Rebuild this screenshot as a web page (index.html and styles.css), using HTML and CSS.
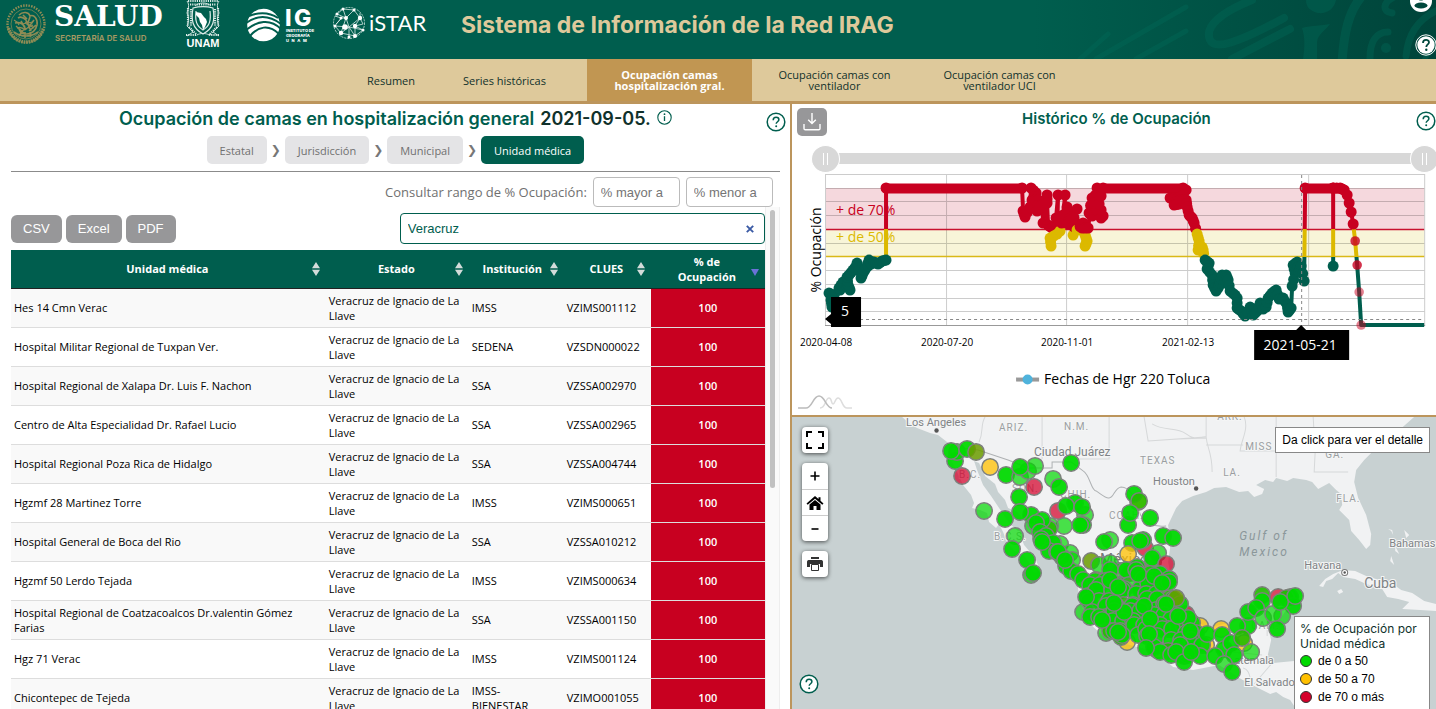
FILE: index.html
```html
<!DOCTYPE html>
<html lang="es">
<head>
<meta charset="utf-8">
<title>Sistema de Información de la Red IRAG</title>
<link rel="stylesheet" href="styles.css">
</head>
<body>
<svg class="defs" aria-hidden="true">
  <symbol id="help" viewBox="0 0 20 20">
    <circle cx="10" cy="10" r="8.8" fill="#fff" stroke="currentColor" stroke-width="1.5"/>
    <path d="M7.2 8.2C7.2 6.3 8.5 5.3 10.1 5.3s2.8 1 2.8 2.5c0 1.900-2.700 2-2.700 4" fill="none" stroke="currentColor" stroke-width="1.5"/>
    <circle cx="10.200" cy="14.200" r="1" fill="currentColor"/>
  </symbol>
  <symbol id="sort" viewBox="0 0 8 14">
    <path d="M4 0l4 6.200H0zM4 14L0 7.800h8z" fill="#d3dcda"/>
  </symbol>
</svg>

<header class="top">
  <svg class="pattern" viewBox="0 0 436 59" preserveAspectRatio="xMaxYMid slice" aria-hidden="true">
    <g fill="none" stroke="#006a58" stroke-opacity=".4" stroke-linecap="round">
      <path stroke-width="5" d="M80 59L108 34M96 59l90-52M136 59l50-28"/>
      <path stroke-width="8" d="M252 0c-30 12-48 26-42 40 5 10 26 4 74-22M232 59l58-30"/>
      <path stroke-width="9" d="M362 -4c-14 16-18 38-20 66"/>
      <path stroke-width="7" d="M396-4c-14 6-14 16-4 17M370 58c0-16 6-26 18-26M406 56c2-20 10-36 32-46"/>
      <path stroke-width="5" d="M424 60l14-22"/>
    </g>
    <g fill="#006a58" fill-opacity=".4"><path d="M306 0h30c-2 10-10 14-18 13-8-2-12-6-12-13zM302 28c10-3 20-2 28-4-6 8-12 10-13 18v17h-14c2-12 2-22-1-31z"/><circle cx="386" cy="48" r="5"/></g>
  </svg>
  <svg class="seal" viewBox="0 0 42 42" role="img" aria-label="Escudo Nacional">
    <g fill="none" stroke="#8f8c55">
      <circle cx="21" cy="21" r="18.500" stroke-width="2.400" stroke-dasharray="1.500 1.200"/>
      <circle cx="21" cy="21" r="15" stroke-width=".7"/>
      <path stroke-width="3.400" stroke-dasharray="1.600 .8" d="M3.500 25c3 9 10 14 17.500 14s14.500-5 17.500-14"/>
      <path stroke-width="1.600" d="M14 12c4-4 10-3 11 1 4-2 8 3 7 9-1 5-5 9-10 9-4 0-7-2-8-5M13 15c3-2 6 0 8 2M10 20c4-1 8 1 10 4M12 25c3-1 6 0 8 2M18 12l4 4M25 14l-3 8M29 17l-6 8M31 22l-7 6M9 29c4 3 8 4 12 4s8-1 12-4M14 33l3-5M20 35v-6M26 34l-1-5M16 18l5 9M20 15l6 13"/>
      <path stroke-width="1.200" d="M9 17c2 1 4 2 5 5M11 23l9 8M17 21l11-2M15 29l13-7M20 19l9 6"/>
    </g>
  </svg>
  <div class="salud"><b>SALUD</b><span>SECRETARÍA DE SALUD</span></div>
  <div class="unam">
    <svg viewBox="0 0 36 38" aria-hidden="true">
      <g fill="none" stroke="#dcebe7">
        <path stroke-width="1.200" d="M8 8c-2 12-1 20 10 26C29 28 30 20 28 8 21 6 15 6 8 8zM11 11c-1 9 0 15 7 19 7-4 8-10 7-19"/>
        <path stroke-width="2.200" stroke-dasharray="1.200 1" d="M3 1h30M5 4.500h26M3 8v18M6 9v17M33 8v18M30 9v17M4 27l8 8M32 27l-8 8M1 35h11M24 35h11"/>
        <path stroke-width=".9" d="M2 1c3 4 1 8 0 12 2 4 2 8 0 13l6 6-6 4M34 1c-3 4-1 8 0 12-2 4-2 8 0 13l-6 6 6 4M12 35c3-2 9-2 12 0M10 6c4-4 12-4 16 0"/>
      </g>
      <path fill="#fff" d="M11 12l5 1 3 4 2 2 1 3-2 5-2 3-1-5-2-3-1-4-3-3z"/>
    </svg>
    <b>UNAM</b>
  </div>
  <svg class="ig" viewBox="0 0 70 34" role="img" aria-label="Instituto de Geografía UNAM">
    <circle cx="16.500" cy="17" r="16.300" fill="#fff"/>
    <g fill="none" stroke="#005e4e" stroke-width="2"><path d="M2 8C12 4 22 4 31 10M-1 15C10 7 22 7 34 16M-1 22c11-9 24-12 35-1M2 29c9-11 20-13 30-3"/></g>
    <g fill="#fff" font-family="Inter, sans-serif" font-weight="800">
      <text x="38" y="18" font-size="23">I</text><text x="47" y="18" font-size="23">G</text>
      <text x="39" y="24" font-size="4">INSTITUTO DE</text><text x="39" y="29" font-size="4">GEOGRAFÍA</text><text x="39" y="34" font-size="4">U&#160;&#160; N&#160;&#160; A&#160;&#160; M</text>
    </g>
  </svg>
  <svg class="istar" viewBox="0 0 96 34" role="img" aria-label="iSTAR">
    <g fill="none" stroke="#d8e8e4" stroke-width=".8">
      <circle cx="17" cy="17" r="15.500" stroke-dasharray="2 1"/>
      <path d="M5 8l9 4 8-8 6 8-5 8 8 4-8 6-6-9-8 6-6-7 6-8-6-2M14 12l3 9 11-9M14 12L9 27l14 3 0-10M4 18l5-5M22 4L11 3 14 12M28 12l3 6-8 2M9 12l5 0M3 20l14 1M17 21l0 10M28 7l0 5M11 3l-6 5M31 24l-14-3"/>
    </g>
    <g fill="#fff"><circle cx="5" cy="8" r="1.500"/><circle cx="14" cy="12" r="2"/><circle cx="22" cy="4" r="1.500"/><circle cx="28" cy="12" r="2.200"/><circle cx="23" cy="20" r="2.200"/><circle cx="31" cy="24" r="1.500"/><circle cx="23" cy="30" r="2"/><circle cx="13" cy="21" r="2.800"/><circle cx="9" cy="27" r="2.200"/><circle cx="3" cy="20" r="1.500"/><circle cx="9" cy="12" r="1.500"/><circle cx="11" cy="3" r="1.500"/><circle cx="17" cy="31" r="1.500"/></g>
    <text x="37" y="25" font-size="22" fill="#fff" font-family="Lato, sans-serif">iSTAR</text>
  </svg>
  <h1>Sistema de Información de la Red IRAG</h1>
  <button class="user" aria-label="Usuario"><svg viewBox="0 0 22 22"><circle cx="11" cy="11" r="11" fill="#fff"/><circle cx="11" cy="7" r="3.500" fill="#00483c"/><ellipse cx="11" cy="15.500" rx="6.500" ry="3" fill="#00483c"/></svg></button>
  <button class="tophelp" aria-label="Ayuda"><svg viewBox="0 0 22 22"><circle cx="11" cy="11" r="10.200" fill="none" stroke="#fff"/><circle cx="11" cy="11" r="8.700" fill="#fff"/><path d="M8 9c0-4 6-4 6-.7 0 2.200-2.700 2-2.700 4.700" fill="none" stroke="#00483c" stroke-width="1.800"/><circle cx="11.300" cy="15.800" r="1.200" fill="#00483c"/></svg></button>
</header>

<nav class="tabs">
  <a href="#" class="short">Resumen</a>
  <a href="#">Series históricas</a>
  <a href="#" class="active" aria-current="page">Ocupación camas hospitalización gral.</a>
  <a href="#">Ocupación camas con ventilador</a>
  <a href="#">Ocupación camas con ventilador UCI</a>
</nav>

<main class="board">
  <section class="left">
    <h2>Ocupación de camas en hospitalización general <span>2021-09-05.</span>
      <svg class="info" viewBox="0 0 15 15"><circle cx="7.500" cy="7.500" r="6.700" fill="none" stroke="#005e4e" stroke-width="1.100"/><path d="M7.500 6.200v4.800" fill="none" stroke="#005e4e" stroke-width="1.300"/><circle cx="7.500" cy="4.200" r=".9" fill="#005e4e"/></svg></h2>
    <button class="help" aria-label="Ayuda"><svg><use href="#help"/></svg></button>
    <div class="crumbs">
      <button>Estatal</button><i>❯</i><button>Jurisdicción</button><i>❯</i><button>Municipal</button><i>❯</i><button class="on">Unidad médica</button>
    </div>
    <form class="range-form">
      <label for="min">Consultar rango de % Ocupación:</label>
      <input id="min" placeholder="% mayor a"><input aria-label="% menor a" placeholder="% menor a">
    </form>
    <div class="scroller">
      <div class="content">
        <div class="tools">
          <button>CSV</button><button>Excel</button><button>PDF</button>
          <div class="search"><input aria-label="Buscar" value="Veracruz" autofocus><button aria-label="Borrar"><svg viewBox="0 0 8 8"><path d="M.8.8l6.400 6.400M7.200.8L.8 7.200" stroke="#3b5ba5" stroke-width="1.900"/></svg></button></div>
        </div>
        <table>
          <colgroup><col class="c1"><col class="c2"><col class="c3"><col class="c4"><col class="c5"></colgroup>
          <thead><tr>
            <th>Unidad médica<svg><use href="#sort"/></svg></th><th>Estado<svg><use href="#sort"/></svg></th><th class="tight">Institución<svg><use href="#sort"/></svg></th><th>CLUES<svg><use href="#sort"/></svg></th>
            <th aria-sort="descending">% de Ocupación<svg viewBox="0 0 8 14"><path d="M0 7h8l-4 7z" fill="#6a72d8"/></svg></th>
          </tr></thead>
          <tbody>
            <tr><td>Hes 14 Cmn Verac</td><td>Veracruz de Ignacio de La Llave</td><td>IMSS</td><td>VZIMS001112</td><td>100</td></tr>
            <tr><td>Hospital Militar Regional de Tuxpan Ver.</td><td>Veracruz de Ignacio de La Llave</td><td>SEDENA</td><td>VZSDN000022</td><td>100</td></tr>
            <tr><td>Hospital Regional de Xalapa Dr. Luis F. Nachon</td><td>Veracruz de Ignacio de La Llave</td><td>SSA</td><td>VZSSA002970</td><td>100</td></tr>
            <tr><td>Centro de Alta Especialidad Dr. Rafael Lucio</td><td>Veracruz de Ignacio de La Llave</td><td>SSA</td><td>VZSSA002965</td><td>100</td></tr>
            <tr><td>Hospital Regional Poza Rica de Hidalgo</td><td>Veracruz de Ignacio de La Llave</td><td>SSA</td><td>VZSSA004744</td><td>100</td></tr>
            <tr><td>Hgzmf 28 Martinez Torre</td><td>Veracruz de Ignacio de La Llave</td><td>IMSS</td><td>VZIMS000651</td><td>100</td></tr>
            <tr><td>Hospital General de Boca del Rio</td><td>Veracruz de Ignacio de La Llave</td><td>SSA</td><td>VZSSA010212</td><td>100</td></tr>
            <tr><td>Hgzmf 50 Lerdo Tejada</td><td>Veracruz de Ignacio de La Llave</td><td>IMSS</td><td>VZIMS000634</td><td>100</td></tr>
            <tr><td>Hospital Regional de Coatzacoalcos Dr.valentin Gómez Farias</td><td>Veracruz de Ignacio de La Llave</td><td>SSA</td><td>VZSSA001150</td><td>100</td></tr>
            <tr><td>Hgz 71 Verac</td><td>Veracruz de Ignacio de La Llave</td><td>IMSS</td><td>VZIMS001124</td><td>100</td></tr>
            <tr><td>Chicontepec de Tejeda</td><td>Veracruz de Ignacio de La Llave</td><td>IMSS-BIENESTAR</td><td>VZIMO001055</td><td>100</td></tr>
          </tbody>
        </table>
      </div>
      <div class="rail"><div class="thumb"></div></div>
    </div>
  </section>

  <section class="right">
    <div class="history">
      <div class="chart-head">
        <button class="download" aria-label="Descargar"><svg viewBox="0 0 18 18"><path d="M9 0v10M5.200 6.800L9 10.600l3.800-3.800M1 11v4.500c0 .8.500 1.300 1.300 1.300h13.400c.8 0 1.300-.5 1.300-1.300V11" fill="none" stroke="#fff" stroke-width="1.400"/></svg></button>
        <h3>Histórico % de Ocupación</h3>
        <button class="help" aria-label="Ayuda"><svg><use href="#help"/></svg></button>
      </div>
      <div class="period">
        <input type="range" aria-label="Fecha inicial" min="0" max="100" value="0"><input type="range" aria-label="Fecha final" min="0" max="100" value="100">
      </div>
      <svg class="plot" viewBox="792 173 644 242" role="img" aria-label="Histórico de ocupación">
        <defs><linearGradient id="levels" gradientUnits="userSpaceOnUse" x1="0" y1="174" x2="0" y2="326">
          <stop offset=".365" stop-color="#c80020"/><stop offset=".365" stop-color="#dcb900"/><stop offset=".546" stop-color="#dcb900"/><stop offset=".546" stop-color="#005e4e"/></linearGradient></defs>
        <path fill="#f5d8dd" d="M826 188h598v41H826z"/><path fill="#f8f5d8" d="M826 230h598v27H826z"/>
        <path stroke="#000" stroke-opacity=".2" fill="none" d="M825.500 325V174.500H1424.500V325M826 188.500h598M826 201.500h598M826 215.500h598M826 243.500h598M826 270.500h598M826 284.500h598M826 298.500h598M826 311.500h598M946.500 175v150M1066.500 175v150M1187.500 175v150M1308.500 175v150"/>
        <path stroke="#999" d="M825 325.500h600"/>
        <path stroke="#c8102e" stroke-width="1.500" d="M826 229.500h598"/><path stroke="#d9b918" stroke-width="1.500" d="M826 256.500h598"/>
        <g id="series"></g>
        <text x="836" y="215" font-size="14" fill="#c80020">+ de 70%</text>
        <text x="836" y="242" font-size="14" fill="#dcb900">+ de 50%</text>
        <path stroke="#888" stroke-dasharray="3 3" d="M860 319.500h564M1301.500 175v150"/>
        <text class="mid" transform="translate(821 250) rotate(-90)" font-size="14">% Ocupación</text>
        <g class="mid" font-size="10"><text x="826" y="346">2020-04-08</text><text x="947" y="346">2020-07-20</text><text x="1067" y="346">2020-11-01</text><text x="1188" y="346">2021-02-13</text></g>
        <path d="M831 297h30v30h-30v-3l-6-5 6-5zM1254 330h42l5-5 5 5h43v30h-95z"/>
        <g class="mid" fill="#fff" font-size="14"><text x="845" y="316">5</text><text x="1300" y="350">2021-05-21</text></g>
        <path stroke="#999" stroke-width="4" d="M1016 379.500h23"/><circle cx="1027.500" cy="379.500" r="5" fill="#4fb3dc"/>
        <text x="1044" y="384" font-size="14">Fechas de Hgr 220 Toluca</text>
        <path fill="none" stroke="#ddd" stroke-width="1.500" d="M820 408c6 0 5-10 9-10 3 0 2 6 4 6s2-6 5-6c4 0 4 10 9 10h5"/><path fill="none" stroke="#bbb" stroke-width="1.500" d="M798 408h8c6 0 7-12 13-12s7 12 13 12"/>
      </svg>
    </div>
    <div class="map">
      <svg class="canvas" viewBox="792 417 644 292" preserveAspectRatio="xMidYMid slice" role="img" aria-label="Mapa de unidades médicas">
        <g fill="#f1f2f3">
          <path d="M902 417L910 424 917 428 930 433 938 435 947 442 953 448 950 458 957 472 963 485 971 495 974 503 972 508 980 510 987 513 989 522 996 528 999 524 1003 532 1007 542 1014 551 1023 555 1029 563 1034 573 1040 571 1036 560 1030 552 1024 545 1019 532 1010 524 1003 514 997 505 991 496 983 485 977 470 974 461 979 463 985 476 995 484 998 492 1005 500 1008 508 1017 512 1030 527 1043 545 1063 566 1077 582 1080 602 1088 622 1103 636 1126 644 1156 652 1173 667 1193 670 1219 665 1239 678 1256 687 1270 694 1276 692 1283 697 1290 700 1300 715H1345V663L1294 661 1273 663 1267 658 1271 640 1268 628 1278 622 1286 610 1303 597 1293 588 1256 592 1246 615 1233 622 1206 628 1186 612 1173 588 1168 562 1170 548 1168 525 1176 508 1182 501 1193 496 1206 492 1214 488 1226 487 1239 492 1248 491 1254 497 1262 494 1264 489 1256 485 1265 480 1273 482 1276 478 1287 481 1293 478 1306 480 1312 482 1318 489 1329 483 1336 490 1341 494 1342 505 1339 510 1349 520 1351 531 1359 540 1366 549 1370 545 1371 534 1366 515 1358 498 1354 482 1356 470 1364 460 1376 448 1390 442 1398 431 1414 417z"/>
          <path d="M1319 586L1325 579 1333 574 1343 570 1355 571 1366 576 1379 580 1390 582 1401 590 1412 593 1424 601 1436 604V611L1420 610 1402 609 1409 602 1398 599 1387 597 1382 589 1366 584 1355 579 1343 577 1338 573 1332 579 1326 581 1323 587zM1337 591l4-2 2 3-4 2zM1388 529l4 1 1 5-2-4zM1395 546l4 8-4-3zM1391 556l3 9-4-4zM1404 530l5 5-3 3zM1410 543l3 4-3-3z"/>
        </g>
        <path fill="none" stroke="#d6d8d9" d="M985 417c-5 8-1 14-6 25M1042 417v42M1109 417v42h-33M1148 441l30-2 28-1M1206 417v20c1 12 6 15 6 35M1206 445h37M1244 417c5 12-3 23-4 34h36M1276 417v60M1313 417l2 35-1 20h34M1315 452h40M1205 437l-57 4-4-24M1152 424c12 8 24 2 34 10s14 2 20 3M1267 636v-10h-8M1262 655l-30-3M1243 668c8 2 6 12 10 18M1272 663l-18 21"/>
        <path fill="none" stroke="#aeb1b3" d="M952 447l26 3 30 10 20 8h24v-6h19l12 9c7 4 8 20 13 20 6 4 10 8 13 7 5 0 5-10 12-11 9 0 15 12 18 24 2 10 15 17 27 15"/>
        <g class="place">
          <g font-size="12" fill="#7f8386"><text x="906" y="426" font-size="11">Los Angeles</text><text x="1034" y="456">Ciudad Juárez</text><text x="1153" y="485" font-size="11">Houston</text><text x="1389" y="547" font-size="11">Bahamas</text><text x="1304" y="569" font-size="11">Havana</text><text x="1234" y="664" font-size="11">atemala</text><text x="1244" y="686" font-size="11">El Salvador</text></g>
          <g font-size="10" letter-spacing="1"><text x="999" y="431">ARIZ.</text><text x="1064" y="430">N.M.</text><text x="1140" y="464">TEXAS</text><text x="1223" y="476">LA.</text><text x="1245" y="450">MISS</text><text x="1325" y="458">GA.</text><text x="1336" y="502">FLA.</text><text x="959" y="478">B.C.</text><text x="994" y="540">B.C.S.</text><text x="1012" y="492">SON.</text><text x="1060" y="498">CHIH.</text><text x="1109" y="519">COAH.</text><text x="1217" y="420">ARK.</text><text x="1251" y="629">CAM.</text></g>
          <g font-size="14" fill="#7f8386"><text x="1364" y="588">Cuba</text><text x="1100" y="564" font-size="15" fill="#777">México</text></g>
          <g class="sea" font-size="12" letter-spacing="2" font-style="italic"><text x="1239" y="540">Gulf of</text><text x="1239" y="556">Mexico</text></g>
        </g>
        <circle cx="936.500" cy="430.500" r="2.200" fill="#555"/><circle cx="1196" cy="488.500" r="2.200" fill="#555"/><circle cx="1344.500" cy="572.500" r="3" fill="#fff" stroke="#777"/><circle cx="1344.500" cy="572.500" r="1.200" fill="#555"/>
        <g id="units"></g>
      </svg>
      <div class="controls">
        <div class="bar"><button aria-label="Pantalla completa"><svg viewBox="0 0 18 18"><path d="M1 6V1h5M12 1h5v5M17 12v5h-5M6 17H1v-5" fill="none" stroke="#000" stroke-width="2"/></svg></button></div>
        <div class="bar"><button aria-label="Acercar"><svg viewBox="0 0 18 18"><path d="M9 4.500v9M4.500 9h9" stroke="#000" stroke-width="1.600"/></svg></button><button aria-label="Inicio"><svg viewBox="0 0 18 18"><path d="M9 2l3.500 3V3.200h2V6.800L17.500 9.500l-1.200 1.300L9 4.800 1.700 10.800.5 9.500z"/><path d="M3.500 10.500L9 6l5.500 4.500V16h-4v-4h-3v4h-4z"/></svg></button><button aria-label="Alejar"><svg viewBox="0 0 18 18"><path d="M5.500 9h7" stroke="#000" stroke-width="1.600"/></svg></button></div>
        <div class="bar"><button aria-label="Imprimir"><svg viewBox="0 0 18 18"><path d="M5 2h8v2H5zM1 7c0-1 .5-2 1.500-2h13c1 0 1.500 1 1.500 2v5h-3V9H4v3H1z" fill="#333"/><path d="M5.500 9.500h7v6h-7z" fill="#fff" stroke="#333"/></svg></button></div>
      </div>
      <button class="maphelp" aria-label="Ayuda"><svg><use href="#help"/></svg></button>
      <div class="hint">Da click para ver el detalle</div>
      <div class="legend"><h4>% de Ocupación por Unidad médica</h4>
        <p><i class="green"></i>de 0 a 50</p><p><i class="amber"></i>de 50 a 70</p><p><i class="red"></i>de 70 o más</p></div>
    </div>
  </section>
</main>
<script src="app.js"></script>
</body>
</html>
```

FILE: styles.css
```css
* { box-sizing: border-box; }
body { margin: 0; height: 100vh; display: flex; flex-direction: column; overflow: hidden; font-family: "Open Sans", sans-serif; font-size: 12px; color: #000; background: #fff; }
button { font: inherit; border: 0; padding: 0; background: none; cursor: pointer; }
svg { display: block; }
h1, h2, h3, h4, p { margin: 0; }
.defs { position: absolute; width: 0; height: 0; }

.top { position: relative; flex: none; height: 59px; display: flex; align-items: flex-start; background: linear-gradient(90deg, #005e4e 72%, #00443a); color: #fff; overflow: hidden; }
.pattern { position: absolute; right: 0; top: 0; width: 436px; height: 59px; }
.seal { width: 42px; height: 42px; margin: 3px 6px 0 5px; }
.salud { display: flex; flex-direction: column; width: 130px; padding-left: 1px; }
.salud b { font: bold 28px/34px "DejaVu Serif", serif; }
.salud span { font: 600 8px/8px Inter, sans-serif; color: #a99a63; padding-left: 1px; }
.unam { width: 36px; margin-left: 2px; display: flex; flex-direction: column; align-items: center; }
.unam svg { width: 36px; height: 38px; }
.unam b { font: bold 11px/11px "Liberation Sans", sans-serif; }
.ig, .istar { overflow: visible; }
.ig { width: 70px; height: 34px; margin: 8px 0 0 26px; }
.istar { width: 96px; height: 34px; margin: 6px 0 0 15px; }
.top h1 { margin: 11px 0 0 33px; font: 700 23px/28px Inter, sans-serif; color: #dec99b; white-space: nowrap; }
.user, .tophelp { position: absolute; width: 22px; height: 22px; }
.user { right: 4px; top: -10px; }
.tophelp { right: -1px; top: 34px; }

.tabs { flex: none; display: flex; justify-content: center; height: 45px; padding-left: 6px; background: #dec99b; border-bottom: 3px solid #bc955c; }
.tabs a { width: 165px; padding: 0 24px; display: flex; align-items: center; justify-content: center; text-align: center; font-size: 11px; line-height: 11px; color: #10312b; text-decoration: none; }
.tabs .short { width: 62px; padding: 0; }
.tabs .active { background: #c19652; color: #fff; font-weight: 700; }

.board { flex: 1; min-height: 0; display: grid; grid-template-columns: 55fr 45fr; }
.left { position: relative; min-width: 0; min-height: 0; display: flex; flex-direction: column; padding: 0 10px 0 11px; }
.left h2 { display: flex; justify-content: center; align-items: center; gap: 6px; height: 30px; font: 600 18px/30px Inter, sans-serif; color: #005e4e; }
.left h2 span { color: #10312b; }
.info { width: 15px; height: 15px; margin-bottom: 4px; }
.help svg, .maphelp svg { width: 20px; height: 20px; }
.help, .maphelp { color: #005e4e; }
.left > .help { position: absolute; right: 4px; top: 8px; }
.crumbs { display: flex; justify-content: center; align-items: center; padding: 2px 0 7px; border-bottom: 1px solid #8b8b8b; color: #707070; }
.crumbs button { height: 28px; padding: 0 13px; border-radius: 5px; background: #e4e4e6; color: #707070; font-size: 11px; }
.crumbs .on { background: #005e4e; color: #fff; }
.crumbs i { width: 18px; text-align: center; font: 12px "DejaVu Sans", sans-serif; color: #777; }
.range-form { display: flex; justify-content: flex-end; align-items: center; gap: 6px; padding: 5px 7px 0 0; font-size: 13px; color: #707070; }
input { font: 13px "Liberation Sans", sans-serif; border: 1px solid #bbb; border-radius: 4px; padding: 0 7px; outline: none; }
.range-form input { width: 87px; height: 30px; }
.range-form input::placeholder { color: #757575; }
.scroller { flex: 1; min-height: 0; display: flex; }
.content { flex: 1; min-width: 0; overflow: hidden; }
.tools { display: flex; align-items: center; gap: 4px; height: 43px; }
.tools > button { height: 28px; padding: 0 12px; border-radius: 6px; background: #979799; color: #fff; font: 13px "Liberation Sans", sans-serif; }
.search { position: relative; width: 365px; margin-left: auto; }
.search input { width: 100%; height: 31px; border-color: #005e4e; color: #005e4e; display: block; }
.search button { position: absolute; right: 11px; top: 12px; }
.search button svg { width: 8px; height: 8px; }
table { width: 100%; border-collapse: collapse; table-layout: fixed; line-height: 15px; font-size: 11px; }
.c2 { width: 143px; } .c3 { width: 95px; } .c4 { width: 87px; } .c5 { width: 114px; }
th { position: relative; height: 38px; padding: 0 16px 0 14px; background: #005e4e; color: #fff; border-bottom: 1px solid #222; font-weight: 700; }
th.tight { padding: 0 8px 0 0; }
th svg { position: absolute; right: 6px; top: 12px; width: 8px; height: 14px; }
td { height: 39px; padding: 0 3px; border-bottom: 1px solid #ddd; overflow: hidden; }
td:nth-child(3) { padding-right: 14px; }
tbody tr:nth-child(odd) { background: #f9f9f9; }
td:last-child { background: #c80020; color: #fff; text-align: center; font-weight: 600; }
.rail { width: 15px; padding: 3px 4px; border: 1px solid #eee; border-width: 0 1px; background: #fafafa; }
.thumb { height: 56%; border-radius: 4px; background: #c1c1c1; }

.right { min-width: 0; min-height: 0; display: flex; flex-direction: column; border-left: 2px solid #bc955c; }
.history { flex: none; border-bottom: 2px solid #bc955c; overflow: hidden; }
.chart-head { display: grid; grid-template-columns: 30px 1fr 20px; height: 40px; padding: 4px 0 0 5px; }
.download { display: flex; align-items: center; justify-content: center; height: 28px; border-radius: 5px; background: #979799; }
.download svg { width: 18px; height: 18px; }
.chart-head h3 { padding-right: 10px; text-align: center; font: 600 15px/21px Inter, sans-serif; color: #005e4e; }
.chart-head .help { padding-top: 3px; align-self: start; }
.period { display: grid; height: 29px; margin: 0 -3px 0 19px; }
.period input { grid-area: 1 / 1; align-self: center; width: 100%; height: 28px; margin: 0; padding: 0; border: 0; background: none; appearance: none; pointer-events: none; }
.period input:first-child::-webkit-slider-runnable-track { background: linear-gradient(#d8d8d8, #d8d8d8) center / calc(100% - 28px) 11px no-repeat; }
.period input::-webkit-slider-thumb { appearance: none; width: 29px; height: 28px; border: 1px solid #fff; border-radius: 50%; pointer-events: auto; background: linear-gradient(90deg, #fff 1px, transparent 1px 4px, #fff 4px) center / 5px 12px no-repeat, #d8d8d8; }
.plot { width: 100%; font-family: "Open Sans", sans-serif; }
.mid { text-anchor: middle; }

.map { position: relative; flex: 1; min-height: 0; overflow: hidden; background: #c8d1d2; }
.canvas { width: 100%; height: 100%; }
.place { font-family: Roboto, sans-serif; fill: #9a9ea1; stroke: #f4f5f5; stroke-width: 2px; paint-order: stroke; }
.sea { fill: #8b979a; stroke: none; }
.controls { position: absolute; left: 10px; top: 10px; display: flex; flex-direction: column; gap: 10px; }
.bar { width: 26px; border-radius: 4px; background: #fff; box-shadow: 0 1px 4px rgba(0, 0, 0, .65); }
.bar button { display: flex; align-items: center; justify-content: center; width: 26px; height: 26px; }
.bar button + button { border-top: 1px solid #ccc; }
.bar svg { width: 18px; height: 18px; }
.maphelp { position: absolute; left: 7px; bottom: 15px; }
.hint { position: absolute; right: 6px; top: 10px; padding: 5px 6px; border: 1px solid #888; background: #fff; font: 12px/14px "Liberation Sans", sans-serif; }
.legend { position: absolute; right: 6px; bottom: -3px; width: 136px; height: 96px; padding: 4px 5px; border: 1px solid #888; background: #fff; font: 12px/18px "Liberation Sans", sans-serif; }
.legend h4 { margin-bottom: 1px; font: 400 12px/15px Inter, sans-serif; color: #10312b; }
.legend p { display: flex; align-items: center; gap: 6px; }
.legend i { width: 12px; height: 12px; border: 1px solid #333; border-radius: 50%; }
.green { background: #00d900; } .amber { background: #ffc000; } .red { background: #d4002a; }
```

FILE: app.js
```js
const NS = "http://www.w3.org/2000/svg";
function add(parent, tag, attrs) {
  const el = document.createElementNS(NS, tag);
  for (const key in attrs) el.setAttribute(key, attrs[key]);
  parent.appendChild(el);
}

// Occupancy history as [x, y] points of the plot
const history = [
  [829,293],[833,295],[831,300],[832,307],[840,290],[839,288],[843,282],[850,290],[848,285],[847,277],[849,275],[853,270],[857,265],[857,263],[861,278],[863,273],[866,268],[869,260],[868,266],[874,262],[878,264],[882,261],[886,260],
  [886,188],[1022,188],[1023,211],[1025,217],[1030,207],[1031,188],[1036,193],[1032,200],[1038,200],[1037,211],[1042,205],[1043,223],[1047,195],[1047,203],[1048,225],[1052,228],[1051,246],[1050,238],[1057,234],[1058,195],[1056,218],[1060,231],[1063,215],[1065,195],[1064,222],[1067,207],[1070,218],[1068,224],[1077,209],[1073,235],[1074,218],[1077,230],[1083,223],[1085,246],[1087,241],[1085,235],[1082,228],[1088,228],[1092,198],[1089,213],[1092,216],[1097,188],[1093,203],[1101,218],[1103,216],[1099,204],[1103,188],[1183,188],
  [1170,198],[1178,198],[1174,205],[1179,204],[1183,189],[1186,190],[1180,200],[1186,200],[1187,207],[1189,215],[1192,218],[1194,223],[1197,234],[1199,241],[1198,250],[1203,250],[1202,247],[1205,260],[1209,263],[1207,269],[1212,275],[1213,285],[1216,291],[1218,288],[1220,283],[1222,275],[1226,275],[1228,280],[1230,291],[1235,295],[1237,298],[1237,308],[1241,311],[1245,316],[1250,307],[1253,315],[1257,311],[1260,303],[1263,309],[1266,307],[1268,298],[1272,293],[1276,290],[1279,299],[1283,298],[1287,305],[1288,312],[1291,308],[1292,286],[1295,273],[1293,265],[1297,262],[1299,272],[1301,266],[1304,281],
  [1305,188],[1333,188],[1333,266],[1333,188],[1340,188],[1344,190],[1347,195],[1349,203],[1351,212],[1353,224],[1355,241],[1357,265],[1359,292],[1361,325]
];
const levelColor = y => y < 230 ? "#c80020" : y < 257 ? "#dcb900" : "#005e4e";
const series = document.getElementById("series");
function dot(x, y) {
  const late = x > 1354;
  add(series, "circle", { cx: x, cy: y, r: late ? 4.800 : 5.500, fill: late ? "#c80020" : levelColor(y), opacity: late ? (y > 280 ? 0.5 : 0.8) : 1 });
}
add(series, "path", { d: "M" + history.join("L") + "H1424", fill: "none", stroke: "url(#levels)", "stroke-width": 4, "stroke-linejoin": "round" });
add(series, "path", { d: "M886 188.500H1022M1103 188.500H1183M1305 188.500H1340", stroke: "#c80020", "stroke-width": 10, "stroke-linecap": "round" });
history.forEach(([x, y], i) => {
  const [px, py] = history[i - 1] || [x, y];
  const gap = Math.hypot(x - px, y - py);
  if (gap > 4 && gap < 18 && x < 1347) dot((x + px) / 2, (y + py) / 2);
  dot(x, y);
});

// Medical units on the map: green (g), amber (a), red (r), mixed (o, m) and faint green (f)
const units = document.getElementById("units");
const fills = { g: ["#00d900", 0.94], f: ["#00d900", 0.7], a: ["#ffc000", 0.75], r: ["#d4002a", 0.72], o: ["#6b9c00", 0.85], m: ["#22bb00", 0.9] };
function unit([x, y, kind = "g"]) {
  const [fill, alpha] = fills[kind];
  add(units, "circle", { cx: x, cy: y, r: 8.200, fill, "fill-opacity": alpha, stroke: "#7d807d", "stroke-width": 1.5 });
}
[
  [955,461],[957,452,"f"],[951,451],[967,449],[976,452,"o"],[962,476,"r"],[990,467,"a"],[1006,475],[1020,477,"f"],[1028,471,"f"],[1035,466,"f"],[1020,467],[1071,463],[1053,479,"f"],[1059,487],[1034,487,"r"],[1019,497],
  [984,511,"f"],[1005,519],[1031,515],[1015,536,"f"],[1012,549],[1027,560],[1031,575,"f"],[1033,573],[1020,512],[1058,511,"r"],[1085,515,"f"],[1075,503],[1066,506],[1082,507],[1064,526,"f"],[1083,525],[1080,525],
  [1033,526,"f"],[1050,526,"f"],[1049,529,"m"],[1042,520],[1036,523],[1040,532,"f"],[1046,536],[1041,539],[1060,544,"f"],[1053,543],[1049,551],[1042,542],[1070,553,"f"],[1072,560,"f"],[1066,566],[1062,557],[1057,552],[1071,571],[1078,574],[1083,580],[1058,552],[1065,560],
  [1110,540,"f"],[1104,542],[1091,561,"o"],[1099,565,"f"],[1110,563,"f"],
  [1138,502,"a"],[1134,494],[1139,501,"m"],[1128,525],[1130,513],[1150,518],[1163,536],[1173,538],[1145,548,"r"],[1143,540],[1132,543],[1140,541],[1128,554,"a"],[1158,553,"f"],[1153,562,"f"],[1152,558],[1166,564,"r"],[1130,573,"r"],[1144,573,"a"],[1137,567],
  [1121,571,"f"],[1096,580,"a"],[1083,612,"f"],[1127,642,"a"],[1121,637,"m"],[1106,633,"f"],[1157,650,"a"],[1200,626,"a"],[1221,629,"a"],[1206,645,"a"],[1244,643,"a"],[1186,614,"r"]
].forEach(unit);

// Dense centre of the country: [y, first x, last x]
[[574,1112,1160],[581,1092,1168],[587,1084,1170],[594,1086,1172],[601,1084,1176],[608,1088,1180],[615,1092,1188],[621,1096,1192],[627,1104,1194],[633,1112,1196],[640,1142,1198],[647,1150,1204],[654,1162,1204],[659,1170,1194]].forEach(([y, from, to], row) => {
  for (let x = from + row % 3 * 3, i = 0; x <= to; x += 12, i++) {
    const n = (row * 7 + i * 5) % 13;
    unit([x + n % 3 * 2 - 2, y + n % 5 * 2 - 4, n === 4 ? "m" : n === 9 ? "f" : "g"]);
  }
});
[
  [1086,597],[1102,620],[1118,632],[1124,612],[1144,606],[1150,619],[1114,603],[1138,574],[1110,580],[1118,587],[1154,576],[1169,582],[1162,583],[1176,598,"o"],[1166,604],[1188,618],[1178,616],[1149,634],[1146,648],[1180,645],[1176,652],[1184,662],[1190,631],[1191,652],[1207,634],[1222,635],[1224,649],[1215,656],[1231,643],[1248,626],[1237,626],[1248,612],[1262,595,"m"],[1262,601],[1256,608],[1234,655],[1242,638,"m"],[1251,652,"f"],[1224,664,"f"],[1232,672],
  [1263,618,"f"],[1278,597,"r"],[1290,597],[1286,598,"m"],[1293,606],[1282,616,"f"],[1273,614,"f"],[1280,602],[1295,596],[1277,629]
].forEach(unit);
```
